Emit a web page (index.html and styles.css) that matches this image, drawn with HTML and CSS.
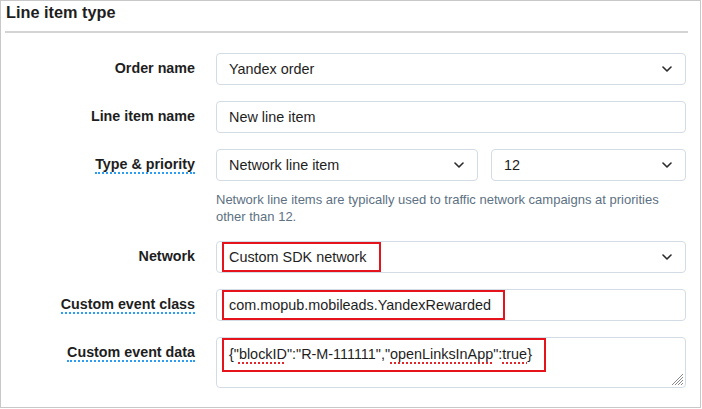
FILE: index.html
```html
<!DOCTYPE html>
<html>
<head>
<meta charset="utf-8">
<link rel="stylesheet" href="styles.css">
</head>
<body>
<div class="panel">
  <h2 class="title">Line item type</h2>
  <div class="divider"></div>
  <div class="form">
    <div class="row">
      <div class="label"><span>Order name</span></div>
      <div class="control">
        <div class="field select">
          <span class="value">Yandex order</span>
          <svg class="chev" width="10" height="6" viewBox="0 0 10 6"><polyline points="1,1 5,5 9,1" fill="none" stroke="#2a2a2a" stroke-width="1.6" stroke-linecap="round" stroke-linejoin="round"/></svg>
        </div>
      </div>
    </div>
    <div class="row">
      <div class="label"><span>Line item name</span></div>
      <div class="control">
        <div class="field"><span class="value">New line item</span></div>
      </div>
    </div>
    <div class="row">
      <div class="label"><span class="hint">Type &amp; priority</span></div>
      <div class="control">
        <div class="pair">
          <div class="field select">
            <span class="value">Network line item</span>
            <svg class="chev" width="10" height="6" viewBox="0 0 10 6"><polyline points="1,1 5,5 9,1" fill="none" stroke="#2a2a2a" stroke-width="1.6" stroke-linecap="round" stroke-linejoin="round"/></svg>
          </div>
          <div class="field select">
            <span class="value">12</span>
            <svg class="chev" width="10" height="6" viewBox="0 0 10 6"><polyline points="1,1 5,5 9,1" fill="none" stroke="#2a2a2a" stroke-width="1.6" stroke-linecap="round" stroke-linejoin="round"/></svg>
          </div>
        </div>
        <p class="help">Network line items are typically used to traffic network campaigns at priorities other than 12.</p>
      </div>
    </div>
    <div class="row">
      <div class="label"><span>Network</span></div>
      <div class="control">
        <div class="field select marked">
          <span class="mark">Custom SDK network</span>
          <svg class="chev" width="10" height="6" viewBox="0 0 10 6"><polyline points="1,1 5,5 9,1" fill="none" stroke="#2a2a2a" stroke-width="1.6" stroke-linecap="round" stroke-linejoin="round"/></svg>
        </div>
      </div>
    </div>
    <div class="row">
      <div class="label"><span class="hint">Custom event class</span></div>
      <div class="control">
        <div class="field marked">
          <span class="mark">com.mopub.mobileads.YandexRewarded</span>
        </div>
      </div>
    </div>
    <div class="row">
      <div class="label"><span class="hint">Custom event data</span></div>
      <div class="control">
        <div class="field area marked">
          <span class="mark tall">{"<span class="spell">blockID</span>":"R-M-111111","<span class="spell">openLinksInApp</span>":<span class="spell">true</span>}</span>
          <svg class="grip" width="14" height="14" viewBox="0 0 14 14">
            <line x1="13" y1="2" x2="2" y2="13" stroke="#8a8a8a" stroke-width="1"/>
            <line x1="13" y1="5" x2="5" y2="13" stroke="#8a8a8a" stroke-width="1"/>
            <line x1="13" y1="8" x2="8" y2="13" stroke="#8a8a8a" stroke-width="1"/>
            <line x1="13" y1="11" x2="11" y2="13" stroke="#8a8a8a" stroke-width="1"/>
          </svg>
        </div>
      </div>
    </div>
  </div>
</div>
</body>
</html>
```

FILE: styles.css
```css
html, body {
  margin: 0;
  padding: 0;
  background: #ffffff;
}

body {
  font-family: "Liberation Sans", Arial, sans-serif;
  color: #222222;
}

.panel {
  box-sizing: border-box;
  width: 701px;
  height: 408px;
  border: 1px solid #c8c8c8;
  background: #ffffff;
}

.title {
  margin: 0;
  padding: 0 0 0 5px;
  font-size: 16.3px;
  line-height: 22px;
  font-weight: bold;
  color: #1e1e1e;
}

.divider {
  height: 2px;
  background: #d4d4d4;
  margin: 8px 12px 0 4px;
}

.form {
  display: flex;
  flex-direction: column;
  gap: 16px;
  margin-top: 20px;
  padding-right: 14px;
}

.row {
  display: grid;
  grid-template-columns: 194px 1fr;
  column-gap: 21px;
  align-items: start;
}

.label {
  text-align: right;
  font-size: 14.3px;
  font-weight: bold;
  line-height: 31px;
  color: #1e1e1e;
}

.hint {
  border-bottom: 2px dotted #2a9df4;
  padding-bottom: 0;
}

.control {
  min-width: 0;
}

.field {
  box-sizing: border-box;
  height: 32px;
  border: 1px solid #d3dce5;
  border-radius: 4px;
  background: #ffffff;
  display: flex;
  align-items: center;
  justify-content: space-between;
  padding: 0 13px 0 12px;
  font-size: 14.4px;
  color: #1e1e1e;
}

.field.marked {
  padding-left: 5px;
}

.field.area {
  position: relative;
  height: 51px;
  align-items: flex-start;
}

.value {
  white-space: nowrap;
}

.chev {
  display: block;
  flex: none;
}

.mark {
  box-sizing: border-box;
  display: inline-block;
  height: 30px;
  line-height: 26px;
  border: 2px solid #e5141c;
  padding: 0 12px 0 5px;
  white-space: nowrap;
}

.mark.tall {
  height: 34px;
  line-height: 28px;
}

.spell {
  text-decoration-line: underline;
  text-decoration-style: dotted;
  text-decoration-color: #e3262a;
  text-decoration-thickness: 1.5px;
  text-underline-offset: 3px;
}

.grip {
  position: absolute;
  right: 1px;
  bottom: 1px;
}

.pair {
  display: grid;
  grid-template-columns: 262px 1fr;
  column-gap: 13px;
}

.help {
  margin: 10px 0 0 0;
  font-size: 13px;
  line-height: 17px;
  color: #5d7183;
}
```
